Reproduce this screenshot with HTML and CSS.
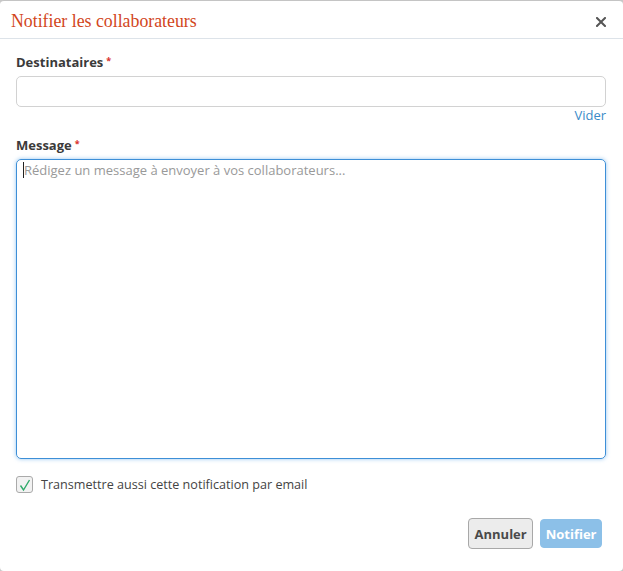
FILE: index.html
```html
<!DOCTYPE html>
<html lang="fr">
<head>
<meta charset="utf-8">
<title>Notifier les collaborateurs</title>
<link rel="stylesheet" href="styles.css">
</head>
<body>
<div class="modal">
  <div class="modal-header">
    <h1 class="modal-title">Notifier les collaborateurs</h1>
    <button class="close" type="button" aria-label="Fermer">
      <svg width="10" height="10" viewBox="0 0 10 10"><path d="M1 1 L9 9 M9 1 L1 9" stroke="#555" stroke-width="2" stroke-linecap="square"/></svg>
    </button>
  </div>
  <div class="modal-body">
    <div class="field">
      <label class="label">Destinataires<span class="req">*</span></label>
      <input class="input" type="text">
      <div class="clear-row"><a class="link" href="#">Vider</a></div>
    </div>
    <div class="field">
      <label class="label">Message<span class="req">*</span></label>
      <div class="textarea"><span class="caret"></span><span class="placeholder">Rédigez un message à envoyer à vos collaborateurs...</span></div>
    </div>
    <label class="check">
      <span class="box"><svg width="14" height="14" viewBox="0 0 14 14"><path d="M2.5 7.5 L5.5 12 L11.5 2" fill="none" stroke="#2eaa6a" stroke-width="1.4"/></svg></span>
      <span class="check-text">Transmettre aussi cette notification par email</span>
    </label>
  </div>
  <div class="modal-footer">
    <button class="btn btn-default" type="button">Annuler</button>
    <button class="btn btn-primary" type="button" disabled>Notifier</button>
  </div>
</div>
</body>
</html>
```
FILE: styles.css
```css
html, body {
  margin: 0;
  padding: 0;
  background: #c8c8c8;
}
body {
  width: 623px;
  height: 571px;
  overflow: hidden;
}
.modal {
  box-sizing: border-box;
  width: 623px;
  height: 571px;
  background: #fff;
  border-top: 1px solid #c4c4c4;
  border-radius: 4px;
  font-family: "Open Sans", sans-serif;
  color: #444;
  display: flex;
  flex-direction: column;
}
.modal-header {
  height: 37px;
  border-bottom: 1px solid #dde3e9;
  display: flex;
  align-items: center;
  justify-content: space-between;
  padding: 0 17px 0 11px;
}
.modal-title {
  margin: 0;
  font-family: "Liberation Serif", serif;
  font-weight: normal;
  font-size: 17.8px;
  color: #d2461c;
  padding-top: 4px;
}
.close {
  border: 0;
  background: none;
  padding: 0;
  width: 10px;
  height: 10px;
  display: flex;
  margin-top: 4px;
}
.modal-body {
  padding: 14px 17px 0 16px;
  display: flex;
  flex-direction: column;
}
.field {
  display: flex;
  flex-direction: column;
}
.label {
  font-weight: 700;
  font-size: 13px;
  color: #3a3a3a;
  line-height: 18px;
  margin-bottom: 5px;
}
.req {
  color: #d9302b;
  font-size: 9px;
  margin-left: 3px;
  vertical-align: 3px;
  line-height: 10px;
}
.input {
  box-sizing: border-box;
  height: 31px;
  border: 1px solid #d2d2d2;
  border-radius: 5px;
  margin: 0;
}
.clear-row {
  display: flex;
  justify-content: flex-end;
  height: 16px;
  margin-bottom: 13px;
}
.link {
  color: #3a8bc8;
  text-decoration: none;
  font-size: 13px;
  line-height: 16px;
}
.textarea {
  box-sizing: border-box;
  height: 300px;
  border: 1px solid #3d8fd7;
  border-radius: 5px;
  box-shadow: 0 0 4px rgba(80, 160, 230, 0.6);
  padding: 0 6px;
  display: flex;
  align-items: flex-start;
}
.caret {
  width: 1px;
  height: 16px;
  background: #222;
  margin-top: 2px;
}
.placeholder {
  font-size: 13px;
  line-height: 20px;
  color: #999;
}
.check {
  display: flex;
  align-items: center;
  margin-top: 17px;
  gap: 8px;
}
.box {
  box-sizing: border-box;
  width: 17px;
  height: 17px;
  border: 1px solid #aaa;
  border-radius: 3px;
  background: #f2f2f2;
  display: flex;
  align-items: center;
  justify-content: center;
}
.check-text {
  font-size: 12.6px;
  color: #444;
}
.modal-footer {
  display: flex;
  justify-content: flex-end;
  align-items: center;
  gap: 7px;
  padding: 25px 21px 0 0;
}
.btn {
  font-family: "Open Sans", sans-serif;
  font-weight: 700;
  font-size: 13px;
  border-radius: 4px;
}
.btn-default {
  height: 31px;
  padding: 0 5.5px;
  background: #ececec;
  border: 1px solid #a8a8a8;
  color: #4a4a4a;
}
.btn-primary {
  height: 29px;
  padding: 0 4.5px;
  background: #8cc0e8;
  border: 1px solid #8cc0e8;
  color: #fff;
}
```
